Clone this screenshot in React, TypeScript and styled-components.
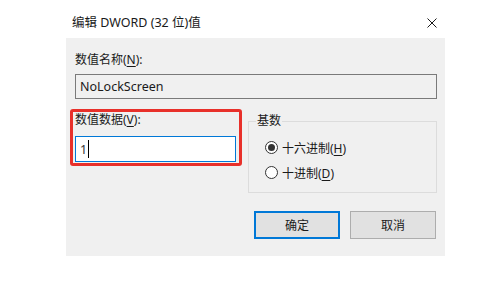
import React from "react";
import styled, { createGlobalStyle } from "styled-components";

const GlobalStyle = createGlobalStyle`
  html, body {
    margin: 0;
    padding: 0;
    background: #ffffff;
  }
  body {
    font-family: "Noto Sans", "Noto Sans CJK SC", sans-serif;
    font-size: 12px;
    color: #1a1a1a;
  }
`;

const Dialog = styled.div`
  margin-left: 66px;
  width: 379px;
`;

const TitleBar = styled.div`
  height: 38px;
  box-sizing: border-box;
  padding: 8px 8px 0 6px;
  display: flex;
  align-items: center;
  justify-content: space-between;
  background: #ffffff;
`;

const Title = styled.span`
  font-size: 12.5px;
  line-height: 16px;
  color: #1a1a1a;
`;

const CloseIcon = styled.svg`
  width: 10px;
  height: 10px;
  display: block;
`;

const Body = styled.div`
  background: #f0f0f0;
  padding: 14px 8px 17px 9px;
  height: 218px;
  box-sizing: border-box;
`;

const Label = styled.div`
  line-height: 16px;
  height: 16px;
`;

const Key = styled.span`
  text-decoration: underline;
  text-underline-offset: 2px;
`;

const NameBox = styled.div`
  margin-top: 6px;
  height: 25px;
  box-sizing: border-box;
  border: 1px solid #7a7a7a;
  background: #f0f0f0;
  padding-left: 4px;
  display: flex;
  align-items: center;
  font-size: 12.5px;
`;

const Row = styled.div`
  margin-top: 10px;
  display: flex;
  align-items: flex-start;
`;

const Highlight = styled.div`
  margin-left: -5px;
  width: 172px;
  box-sizing: border-box;
  border: 3px solid #e8302a;
  border-radius: 3px;
  padding: 0 3px 1px 2px;
`;

const DataBox = styled.div`
  margin-top: 8px;
  height: 26px;
  box-sizing: border-box;
  border: 1px solid #0078d7;
  background: #ffffff;
  padding-left: 4px;
  display: flex;
  align-items: center;
  font-size: 12.5px;
  color: #333;
`;

const Caret = styled.span`
  display: inline-block;
  width: 0;
  height: 18px;
  border-left: 1px solid #000;
  margin-left: 1px;
`;

const Group = styled.fieldset`
  flex: 1;
  margin: 4px 0 0 6px;
  padding: 6px 8px 7px 8px;
  border: 1px solid #dcdcdc;
  min-width: 0;
`;

const Legend = styled.legend`
  padding: 0 1px;
  margin-left: -1px;
  line-height: 16px;
  font-size: 12px;
`;

const RadioRow = styled.div`
  height: 25px;
  display: flex;
  align-items: center;
  padding-left: 8px;
  gap: 4px;
`;

const RadioDot = styled.span<{ $checked?: boolean }>`
  width: 13px;
  height: 13px;
  box-sizing: border-box;
  border: 1px solid #333;
  border-radius: 50%;
  background: #ffffff;
  display: flex;
  align-items: center;
  justify-content: center;

  &::after {
    content: "";
    width: 7px;
    height: 7px;
    border-radius: 50%;
    background: #333;
    display: ${(p) => (p.$checked ? "block" : "none")};
  }
`;

const Buttons = styled.div`
  margin-top: 18px;
  display: flex;
  justify-content: flex-end;
  gap: 10px;
  padding-right: 1px;
`;

const Button = styled.div<{ $primary?: boolean }>`
  width: 86px;
  height: 28px;
  box-sizing: border-box;
  background: #e1e1e1;
  border: ${(p) => (p.$primary ? "2px solid #0078d7" : "1px solid #adadad")};
  display: flex;
  align-items: center;
  justify-content: center;
  font-size: 12px;
`;

const App: React.FC = () => {
  return (
    <>
      <GlobalStyle />
      <Dialog>
        <TitleBar>
          <Title>编辑 DWORD (32 位)值</Title>
          <CloseIcon viewBox="0 0 10 10">
            <path d="M0.5 0.5 L9.5 9.5 M9.5 0.5 L0.5 9.5" stroke="#1a1a1a" strokeWidth="1" fill="none" />
          </CloseIcon>
        </TitleBar>
        <Body>
          <Label>
            数值名称(<Key>N</Key>):
          </Label>
          <NameBox>NoLockScreen</NameBox>
          <Row>
            <Highlight>
              <Label>
                数值数据(<Key>V</Key>):
              </Label>
              <DataBox>
                1<Caret />
              </DataBox>
            </Highlight>
            <Group>
              <Legend>基数</Legend>
              <RadioRow>
                <RadioDot $checked />
                <span>
                  十六进制(<Key>H</Key>)
                </span>
              </RadioRow>
              <RadioRow>
                <RadioDot />
                <span>
                  十进制(<Key>D</Key>)
                </span>
              </RadioRow>
            </Group>
          </Row>
          <Buttons>
            <Button $primary>确定</Button>
            <Button>取消</Button>
          </Buttons>
        </Body>
      </Dialog>
    </>
  );
};

export default App;
